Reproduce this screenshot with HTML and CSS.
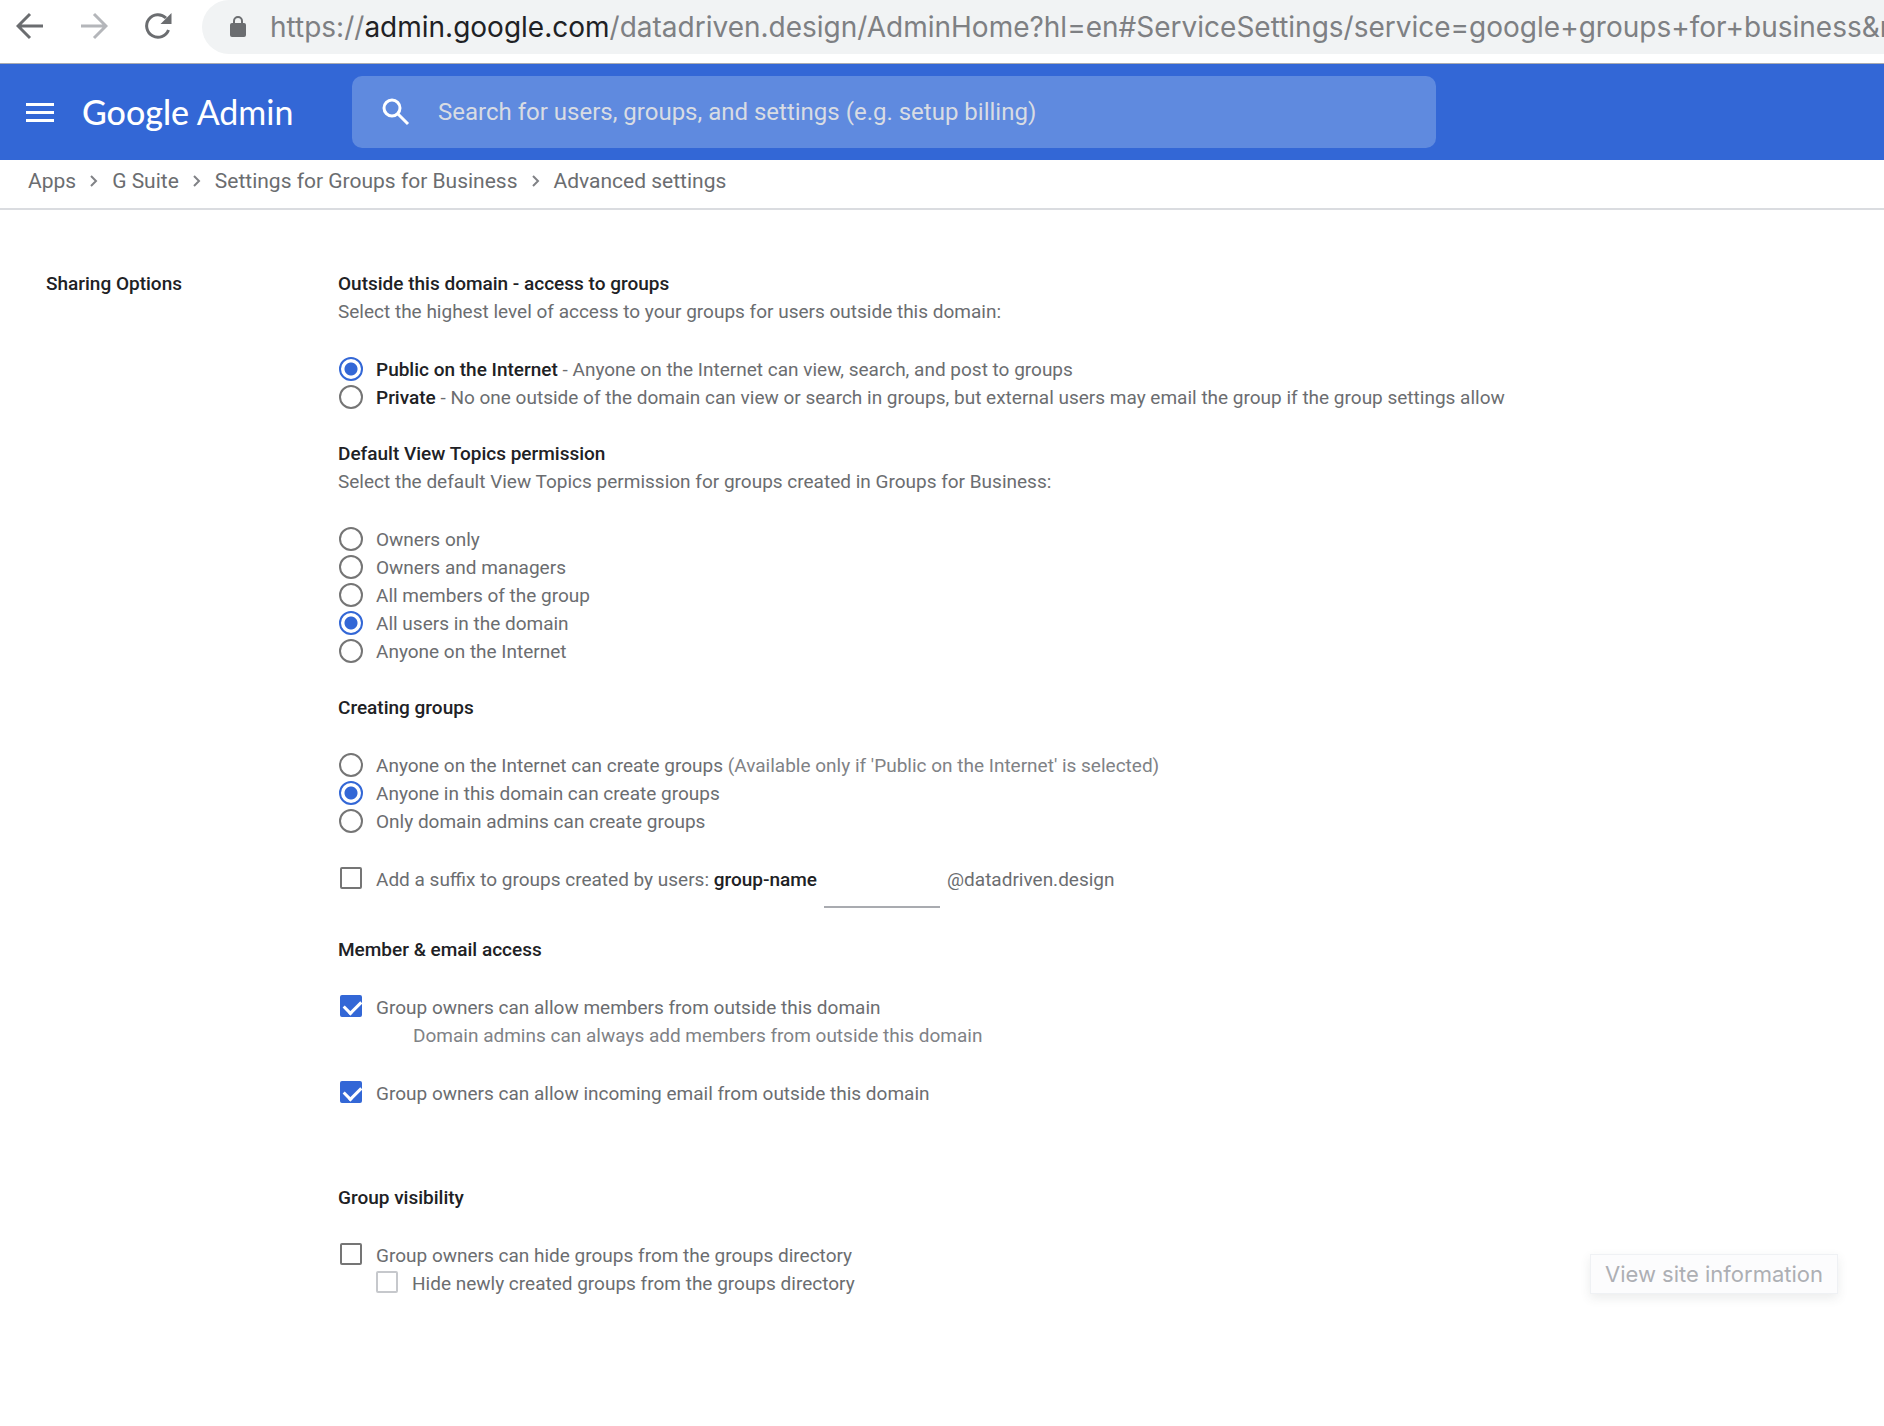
FILE: index.html
```html
<!DOCTYPE html>
<html lang="en">
<head>
    <meta charset="UTF-8">
    <meta name="viewport" content="width=device-width, initial-scale=1.0">
    <title>Google Admin - Advanced settings</title>
    <link rel="stylesheet" href="styles.css">
</head>
<body>
    <div class="browser-bar">
        <button type="button" class="nav-btn" aria-label="Back">
            <svg width="28" height="28" viewBox="0 0 28 28" fill="none" stroke="#6b6d70" stroke-width="3"><path d="M27 14H3M14 2L2 14l12 12"/></svg>
        </button>
        <button type="button" class="nav-btn" aria-label="Forward">
            <svg width="28" height="28" viewBox="0 0 28 28" fill="none" stroke="#b4b6ba" stroke-width="3"><path d="M1 14h24M14 2l12 12-12 12"/></svg>
        </button>
        <button type="button" class="nav-btn" aria-label="Reload">
            <svg width="28" height="28" viewBox="0 0 28 28"><path d="M24.5 18A11.3 11.3 0 1 1 22 6" fill="none" stroke="#6b6d70" stroke-width="3"/><path d="M27.500 1v11h-11z" fill="#6b6d70"/></svg>
        </button>
        <div class="address">
            <svg width="18" height="24" viewBox="0 0 18 24"><path d="M5 9V6a4 4 0 0 1 8 0v3" fill="none" stroke="#6b6d70" stroke-width="2"/><rect x="1" y="8" width="16" height="14" rx="2" fill="#6b6d70"/></svg>
            <div class="url">https://<span class="host">admin.google.com</span>/datadriven.design/AdminHome?hl=en#ServiceSettings/service=google+groups+for+business&amp;n</div>
        </div>
    </div>

    <header class="header">
        <button type="button" class="menu-btn" aria-label="Main menu">
            <svg width="28" height="20" viewBox="0 0 28 20" fill="#fff"><path d="M0 1h28v3H0zM0 9h28v3H0zM0 17h28v3H0z"/></svg>
        </button>
        <a href="#" class="logo"><span class="logo-google">Google</span> <span class="logo-admin">Admin</span></a>
        <div class="search">
            <svg width="30" height="30" viewBox="0 0 30 30" fill="none" stroke="#fff" stroke-width="3"><circle cx="12" cy="11" r="8"/><path d="M18 17l10 10"/></svg>
            <input type="text" aria-label="Search" placeholder="Search for users, groups, and settings (e.g. setup billing)">
        </div>
    </header>

    <nav class="breadcrumb">
        <a href="#">Apps</a>
        <svg width="8" height="12" viewBox="0 0 8 12"><path d="M1 1l5 5-5 5"/></svg>
        <a href="#">G Suite</a>
        <svg width="8" height="12" viewBox="0 0 8 12"><path d="M1 1l5 5-5 5"/></svg>
        <a href="#">Settings for Groups for Business</a>
        <svg width="8" height="12" viewBox="0 0 8 12"><path d="M1 1l5 5-5 5"/></svg>
        <a href="#">Advanced settings</a>
    </nav>

    <main class="settings">
        <h2>Sharing Options</h2>

        <form class="options">
            <section class="group">
                <h3>Outside this domain - access to groups</h3>
                <p>Select the highest level of access to your groups for users outside this domain:</p>
                <div class="list">
                    <label class="option"><input type="radio" name="access" checked><span><b>Public on the Internet</b> - Anyone on the Internet can view, search, and post to groups</span></label>
                    <label class="option"><input type="radio" name="access"><span><b>Private</b> - No one outside of the domain can view or search in groups, but external users may email the group if the group settings allow</span></label>
                </div>
            </section>

            <section class="group">
                <h3>Default View Topics permission</h3>
                <p>Select the default View Topics permission for groups created in Groups for Business:</p>
                <div class="list">
                    <label class="option"><input type="radio" name="view"><span>Owners only</span></label>
                    <label class="option"><input type="radio" name="view"><span>Owners and managers</span></label>
                    <label class="option"><input type="radio" name="view"><span>All members of the group</span></label>
                    <label class="option"><input type="radio" name="view" checked><span>All users in the domain</span></label>
                    <label class="option"><input type="radio" name="view"><span>Anyone on the Internet</span></label>
                </div>
            </section>

            <section class="group">
                <h3>Creating groups</h3>
                <div class="list">
                    <label class="option"><input type="radio" name="create"><span>Anyone on the Internet can create groups <span class="note">(Available only if 'Public on the Internet' is selected)</span></span></label>
                    <label class="option"><input type="radio" name="create" checked><span>Anyone in this domain can create groups</span></label>
                    <label class="option"><input type="radio" name="create"><span>Only domain admins can create groups</span></label>
                </div>
                <div class="list suffix-row">
                    <label class="option"><input type="checkbox"><span>Add a suffix to groups created by users: <b>group-name</b></span></label>
                    <input type="text" class="suffix" aria-label="Suffix">
                    <span>@datadriven.design</span>
                </div>
            </section>

            <section class="group">
                <h3>Member &amp; email access</h3>
                <div class="list">
                    <label class="option"><input type="checkbox" checked><span>Group owners can allow members from outside this domain</span></label>
                    <p class="hint note">Domain admins can always add members from outside this domain</p>
                </div>
                <div class="list">
                    <label class="option"><input type="checkbox" checked><span>Group owners can allow incoming email from outside this domain</span></label>
                </div>
            </section>

            <section class="group visibility">
                <h3>Group visibility</h3>
                <div class="list">
                    <label class="option"><input type="checkbox"><span>Group owners can hide groups from the groups directory</span></label>
                    <label class="option nested"><input type="checkbox" disabled><span>Hide newly created groups from the groups directory</span></label>
                </div>
            </section>
        </form>
    </main>

    <div class="tooltip" role="tooltip">View site information</div>
</body>
</html>
```
FILE: styles.css
```css
* {
    margin: 0;
    padding: 0;
    box-sizing: border-box;
}

body {
    position: relative;
    min-height: 100vh;
    overflow-x: hidden;
    background: #fff;
    color: #6b6d70;
    font-family: Roboto, Arial, sans-serif;
    font-size: 19px;
    line-height: 28px;
}

a {
    color: inherit;
    text-decoration: none;
}

button {
    display: flex;
    border: none;
    background: none;
    cursor: pointer;
}

svg {
    display: block;
    flex: none;
}

/* Browser toolbar */
.browser-bar {
    display: flex;
    align-items: flex-start;
    height: 64px;
    padding-left: 16px;
    border-bottom: 1px solid #a9abb0;
}

.nav-btn {
    margin: 12px 36px 0 0;
}

.address {
    display: flex;
    flex: 1;
    align-items: center;
    min-width: 0;
    height: 54px;
    margin-left: -6px;
    padding-left: 27px;
    border-radius: 27px 0 0 27px;
    background: #f1f3f4;
}

.url {
    margin-left: 23px;
    overflow: hidden;
    color: #7e8083;
    font-family: Inter, Roboto, sans-serif;
    font-size: 28px;
    line-height: 52px;
    white-space: nowrap;
}

.host {
    color: #202124;
}

/* App header */
.header {
    display: flex;
    align-items: center;
    height: 96px;
    padding-left: 26px;
    background: #3367d6;
}

.logo {
    width: 270px;
    margin-left: 28px;
    color: #fff;
    font-family: Lato, sans-serif;
    font-size: 34px;
    line-height: 40px;
    white-space: nowrap;
}

.logo-google {
    font-weight: 500;
}

.search {
    display: flex;
    flex: 0 1 1084px;
    align-items: center;
    height: 72px;
    padding: 0 28px;
    border-radius: 10px;
    background: #5f8adf;
}

.search input {
    flex: 1;
    min-width: 0;
    margin-left: 28px;
    border: none;
    outline: none;
    background: none;
    color: #fff;
    font-family: inherit;
    font-size: 24px;
}

.search input::placeholder {
    color: #d8dce3;
    opacity: 1;
}

/* Breadcrumb */
.breadcrumb {
    display: flex;
    align-items: center;
    gap: 14px;
    height: 50px;
    padding: 0 28px 6px;
    border-bottom: 2px solid #dadce0;
    font-size: 21px;
}

.breadcrumb svg {
    fill: none;
    stroke: #808286;
    stroke-width: 2;
}

/* Settings */
.settings {
    display: grid;
    grid-template-columns: 292px 1fr;
    padding: 60px 46px;
}

h2,
h3 {
    color: #202124;
    font-size: 19px;
    font-weight: 500;
}

b {
    color: #202124;
    font-weight: 500;
}

.group {
    margin-bottom: 28px;
}

.visibility {
    margin-top: 76px;
}

.list {
    margin-top: 30px;
}

.option {
    display: flex;
}

.note {
    color: #808286;
}

.hint {
    padding-left: 75px;
}

.nested {
    padding-left: 36px;
}

.option input {
    flex: none;
    appearance: none;
    position: relative;
    border: 2px solid #757575;
    background: #fff;
}

input[type="radio"] {
    width: 24px;
    height: 24px;
    margin: 1px 13px 0 1px;
    border-radius: 50%;
}

input[type="radio"]:checked {
    border-color: #3367d6;
    background: radial-gradient(circle, #3367d6 6px, #fff 7px);
}

input[type="checkbox"] {
    width: 22px;
    height: 22px;
    margin: 1px 14px 0 2px;
    border-radius: 2px;
}

input[type="checkbox"]:checked {
    border-color: #3367d6;
    background: #3367d6;
}

input[type="checkbox"]:checked::after {
    content: "";
    position: absolute;
    top: 0;
    left: 5px;
    width: 8px;
    height: 14px;
    border: solid #fff;
    border-width: 0 3px 3px 0;
    transform: rotate(45deg);
}

input[type="checkbox"]:disabled {
    border-color: #c6c8cc;
}

.suffix-row {
    display: flex;
    gap: 7px;
}

.suffix {
    width: 116px;
    height: 42px;
    border: none;
    border-bottom: 2px solid #a9abb0;
    outline: none;
    background: none;
    color: inherit;
    font: inherit;
}

/* Tooltip */
.tooltip {
    position: absolute;
    right: 46px;
    bottom: 132px;
    padding: 4px 14px;
    border: 1px solid #eff1f4;
    background: #fcfcfd;
    box-shadow: 0 4px 10px rgba(60, 64, 67, 0.1);
    color: #adafb4;
    font-family: Inter, Roboto, sans-serif;
    font-size: 22px;
    line-height: 30px;
}
```
